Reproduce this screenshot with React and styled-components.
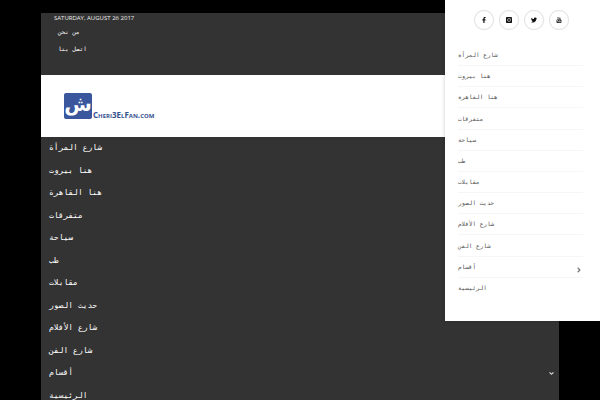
import React from "react"
import styled, { createGlobalStyle } from "styled-components"
import { FaFacebookF, FaTwitter, FaAngleDown, FaAngleRight } from "react-icons/fa"
import { TfiYoutube } from "react-icons/tfi"

const categories = [
  { title: "شارع المرأة" },
  { title: "هنا بيروت" },
  { title: "هنا القاهرة" },
  { title: "متفرقات" },
  { title: "سياحة" },
  { title: "طب" },
  { title: "مقابلات" },
  { title: "حديث الصور" },
  { title: "شارع الأفلام" },
  { title: "شارع الفن" },
  { title: "أقسام", more: true },
  { title: "الرئيسية" },
]

function InstagramIcon() {
  return (
    <svg viewBox="0 0 16 16" width="1em" height="1em" aria-hidden="true">
      <rect width="16" height="16" rx="2" fill="currentColor" />
      <circle cx="8" cy="8" r="4" fill="none" stroke="#ccc" strokeWidth="2" />
      <rect x="12" y="2" width="2" height="2" fill="#ccc" />
    </svg>
  )
}

const socials = [
  { name: "Facebook", icon: <FaFacebookF /> },
  { name: "Instagram", icon: <InstagramIcon /> },
  { name: "Twitter", icon: <FaTwitter /> },
  { name: "Youtube", icon: <TfiYoutube /> },
]

function SideMenu() {
  return (
    <StyledSide>
      <Socials>
        {socials.map((s) => (
          <SocialLink href="#" aria-label={s.name} key={s.name}>
            {s.icon}
          </SocialLink>
        ))}
      </Socials>
      <SideList>
        {categories.map((c) => (
          <SideItem key={c.title}>
            <a href="#">{c.title}</a>
            {c.more && <FaAngleRight />}
          </SideItem>
        ))}
      </SideList>
    </StyledSide>
  )
}

function App() {
  return (
    <>
      <GlobalStyle />
      <Page>
        <TopBar>
          <Today>SATURDAY, AUGUST 26 2017</Today>
          <TopLinks>
            <li><a href="#">من نحن</a></li>
            <li><a href="#">اتصل بنا</a></li>
          </TopLinks>
        </TopBar>
        <Header>
          <Logo href="#">
            <LogoMark>ش</LogoMark>
            <LogoName>Cheri3ElFan.com</LogoName>
          </Logo>
        </Header>
        <nav>
          <NavList>
            {categories.map((c) => (
              <NavItem key={c.title}>
                <a href="#">{c.title}</a>
                {c.more && <FaAngleDown />}
              </NavItem>
            ))}
          </NavList>
        </nav>
      </Page>
      <SideMenu />
    </>
  )
}

const GlobalStyle = createGlobalStyle`
*{
  box-sizing: border-box;
  margin: 0;
  padding: 0;
}
html{
  scrollbar-width: none;
}
body{
  background: #000;
  font-family: "DejaVu Sans Mono", monospace;
}
a{
  color: inherit;
  text-decoration: none;
}
ul{
  list-style: none;
}
`
const Page = styled.div`
margin: 13px 41px 0;
min-height: calc(100vh - 13px);
background: #333;
`
const TopBar = styled.div`
min-height: 62px;
padding: 0 13px;
color: #fff;
`
const Today = styled.p`
font-family: "Open Sans", sans-serif;
font-size: 6px;
line-height: 10px;
color: #eee;
`
const TopLinks = styled.ul`
padding-left: 4px;
li{
  font-size: 6px;
  line-height: 17px;
}
`
const Header = styled.header`
display: flex;
align-items: center;
min-height: 62px;
padding: 0 23px;
background: #fff;
`
const Logo = styled.a`
display: flex;
align-items: flex-end;
gap: 1px;
color: #34508f;
`
const LogoMark = styled.span`
width: 28px;
height: 26px;
border-radius: 2px;
background: #3a569c;
color: #fff;
font-family: "DejaVu Sans", sans-serif;
font-weight: bold;
font-size: 20px;
line-height: 22px;
text-align: center;
`
const LogoName = styled.span`
font-family: "Open Sans", sans-serif;
font-variant: small-caps;
font-weight: bold;
font-size: 8px;
line-height: 9px;
`
const NavList = styled.ul`
display: grid;
grid-auto-rows: 1fr;
min-height: 270px;
`
const NavItem = styled.li`
display: flex;
align-items: center;
justify-content: space-between;
padding: 0 4px 0 8px;
color: #fff;
font-size: 8px;
line-height: 12px;
svg{
  color: #ddd;
  font-size: 7px;
}
`
const StyledSide = styled.aside`
position: absolute;
top: 0;
right: 0;
width: 155px;
padding: 10px 17px 22px 13px;
background: #fff;
box-shadow: 0 0 4px rgba(0,0,0,0.2);
`
const Socials = styled.div`
display: flex;
justify-content: center;
gap: 5px;
margin: 0 0 15px 2px;
`
const SocialLink = styled.a`
display: flex;
justify-content: center;
align-items: center;
width: 20px;
height: 20px;
border: 1px solid #e2e2e2;
border-radius: 50%;
box-shadow: 0 0 1px #e2e2e2;
color: #111;
font-size: 6px;
`
const SideList = styled.ul`
display: grid;
grid-auto-rows: 1fr;
min-height: 254px;
`
const SideItem = styled.li`
display: flex;
align-items: center;
justify-content: space-between;
border-bottom: 1px solid #f6f6f6;
color: #555;
font-size: 6px;
line-height: 10px;
&:last-child{
  border-bottom: none;
}
svg{
  align-self: flex-end;
  margin-bottom: 3px;
  color: #777;
  font-size: 8px;
}
`

export default App
